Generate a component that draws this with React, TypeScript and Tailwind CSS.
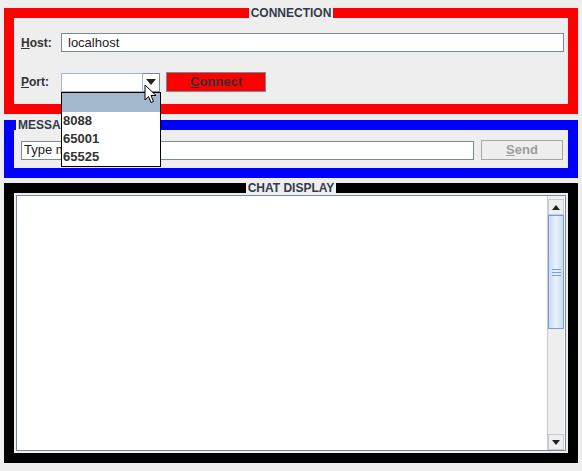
import React from "react";

const FONT = "font-['Liberation_Sans',Arial,sans-serif]";

function Title({ text, align }: { text: string; align: "center" | "left" }) {
  return (
    <div
      className={`absolute top-[-10px] h-[11px] flex items-center ${align === "center" ? "left-0 right-0 justify-center" : "left-[2px]"}`}
    >
      <span className="bg-[#eeeeee] px-[2px] text-[12px] leading-[11px] font-bold text-[#333a4a]">{text}</span>
    </div>
  );
}

function Cursor() {
  return (
    <svg className="absolute left-[144px] top-[84px]" width="13" height="20" viewBox="0 0 13 20">
      <path d="M1 1 L1 16 L4.5 12.5 L7 18.5 L9.5 17.5 L7 11.5 L12 11.5 Z" fill="#fff" stroke="#000" strokeWidth="1" strokeLinejoin="round" />
    </svg>
  );
}

function ScrollArrow({ up }: { up?: boolean }) {
  return (
    <div className="h-[16px] w-full bg-[#eeeeee] border border-[#c8ccd2] flex items-center justify-center">
      <svg width="8" height="5" viewBox="0 0 8 5">
        <path d={up ? "M0 5 L4 0 L8 5 Z" : "M0 0 L8 0 L4 5 Z"} fill="#222" />
      </svg>
    </div>
  );
}

export default function App() {
  return (
    <div className={`relative w-[582px] h-[471px] bg-[#eeeeee] pt-[8px] px-[4px] ${FONT} text-[12px] text-[#333]`}>
      {/* connection */}
      <div className="relative h-[106px] border-[10px] border-[#ff0000]">
        <Title text="CONNECTION" align="center" />
        <div className="pl-[7px] pr-[4px] pt-[15px]">
          <div className="flex items-center h-[19px]">
            <span className="w-[40px] font-bold text-[#333]"><u>H</u>ost:</span>
            <div className="flex-1 h-[19px] bg-white border border-[#7a8a99] pl-[6px] flex items-center text-[13px] text-[#222]">localhost</div>
          </div>
          <div className="flex items-center h-[20px] mt-[20px]">
            <span className="w-[40px] font-bold text-[#333]"><u>P</u>ort:</span>
            <div className="flex h-[19px] w-[99px]">
              <div className="flex-1 bg-white border border-[#a3b8cc]"></div>
              <div className="w-[17px] bg-white border border-l-0 border-[#7a8a99] flex items-center justify-center">
                <svg width="10" height="6" viewBox="0 0 10 6">
                  <path d="M0 0 L10 0 L5 6 Z" fill="#222" />
                </svg>
              </div>
            </div>
            <div className="ml-[6px] w-[100px] h-[20px] bg-[#ff0000] border border-[#7a8a99] flex items-center justify-center font-bold text-[13px] text-[#333]">
              <span><u>C</u>onnect</span>
            </div>
          </div>
        </div>
      </div>

      {/* message */}
      <div className="relative mt-[6px] h-[58px] border-[10px] border-[#0000ff]">
        <Title text="MESSAGE" align="left" />
        <div className="flex items-center pl-[7px] pr-[5px] pt-[10px]">
          <div className="w-[453px] h-[19px] bg-white border border-[#7a8a99] pl-[2px] flex items-center text-[13px] text-[#222]">Type message...</div>
          <div className="ml-[7px] w-[82px] h-[20px] border border-[#a6a6a6] bg-[#eeeeee] flex items-center justify-center font-bold text-[13px] text-[#9d9d9d]">
            <span><u>S</u>end</span>
          </div>
        </div>
      </div>

      {/* chat display */}
      <div className="relative mt-[5px] h-[280px] border-[10px] border-black">
        <Title text="CHAT DISPLAY" align="center" />
        <div className="h-full p-[2px]">
          <div className="h-full bg-white border border-[#7a8a99] flex">
            <div className="flex-1"></div>
            <div className="w-[17px] mr-[1px] pt-[3px] flex flex-col bg-[#eeeeee] border-l border-[#c8ccd2]">
              <ScrollArrow up />
              <div className="h-[114px] border border-[#7a9cd3] bg-gradient-to-r from-[#c9daf2] via-[#eaf1fb] to-[#c9daf2] flex flex-col items-center justify-center gap-[2px]">
                <div className="w-[9px] h-[1px] bg-[#7a9cd3]"></div>
                <div className="w-[9px] h-[1px] bg-[#7a9cd3]"></div>
                <div className="w-[9px] h-[1px] bg-[#7a9cd3]"></div>
              </div>
              <div className="flex-1"></div>
              <ScrollArrow />
            </div>
          </div>
        </div>
      </div>

      {/* open combo popup */}
      <div className="absolute left-[61px] top-[92px] w-[100px] h-[75px] bg-white border border-black font-bold text-[13px] text-[#333]">
        <div className="h-[19px] bg-[#a3b8cc]"></div>
        <div className="h-[18px] pl-[1px] flex items-center">8088</div>
        <div className="h-[18px] pl-[1px] flex items-center">65001</div>
        <div className="h-[18px] pl-[1px] flex items-center">65525</div>
      </div>
      <Cursor />
    </div>
  );
}
